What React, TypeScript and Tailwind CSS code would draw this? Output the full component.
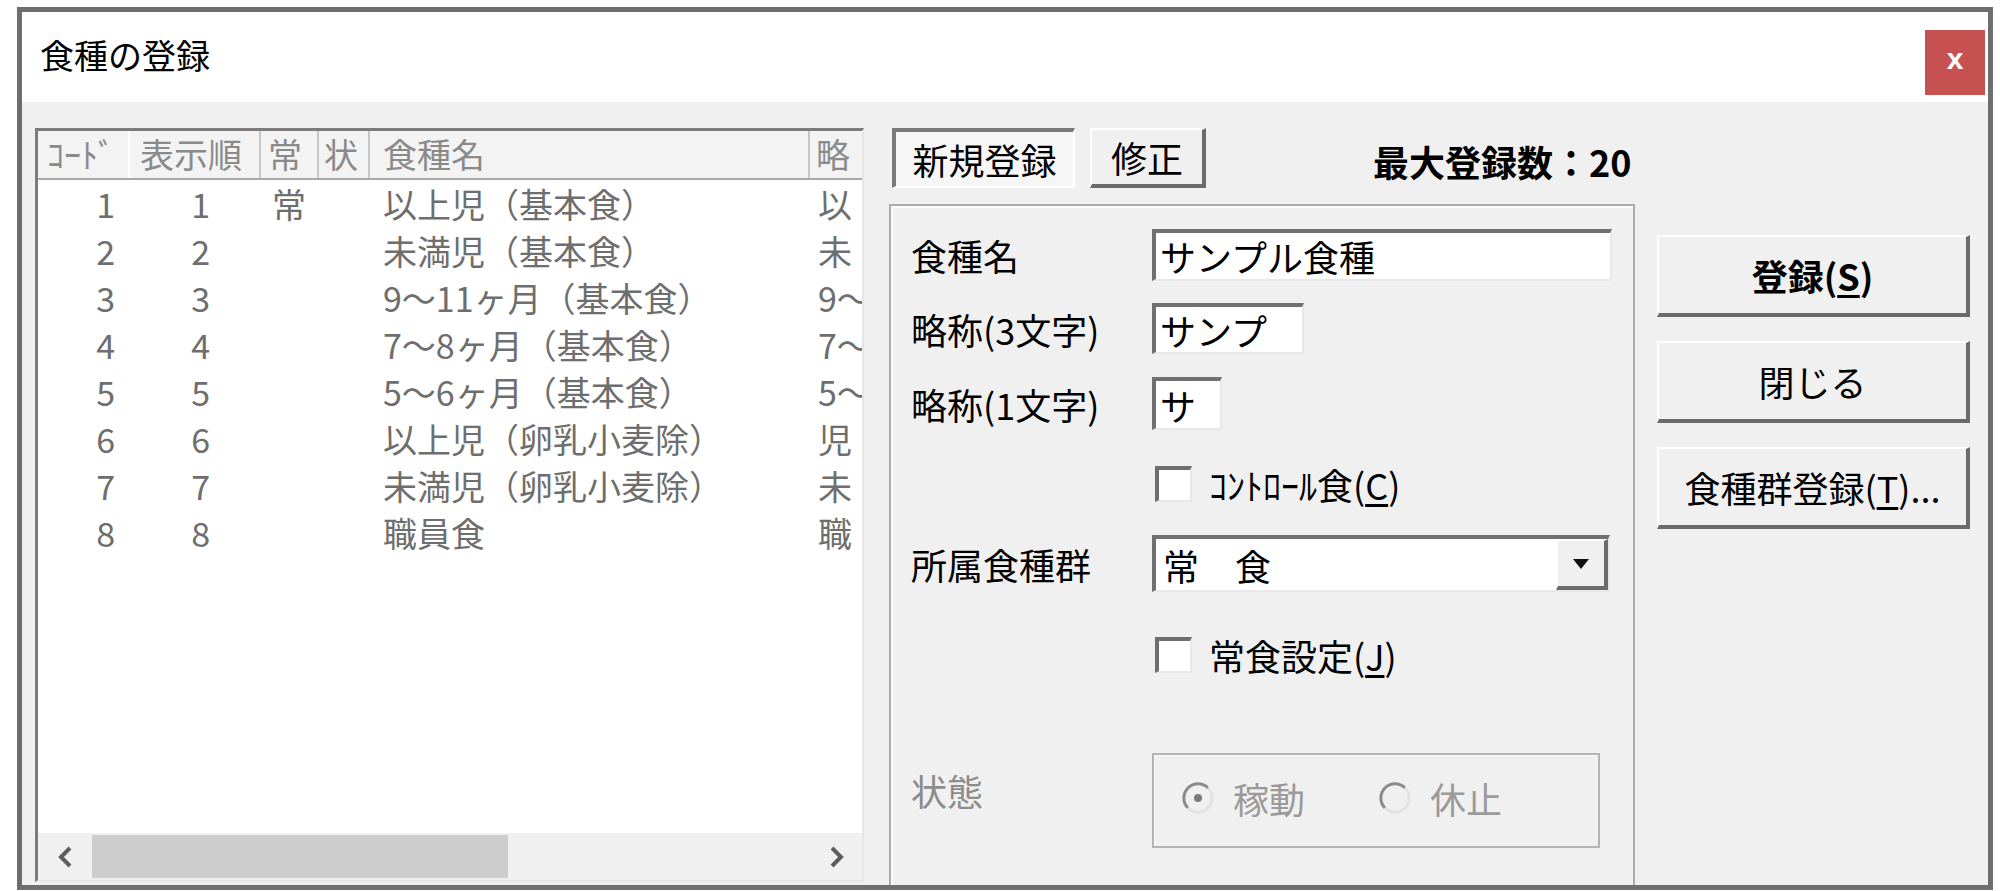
import React from 'react'

const rows = [
  ['1', '1', '常', '以上児（基本食）', '以'],
  ['2', '2', '', '未満児（基本食）', '未'],
  ['3', '3', '', '9～11ヶ月（基本食）', '9～'],
  ['4', '4', '', '7～8ヶ月（基本食）', '7～'],
  ['5', '5', '', '5～6ヶ月（基本食）', '5～'],
  ['6', '6', '', '以上児（卵乳小麦除）', '児'],
  ['7', '7', '', '未満児（卵乳小麦除）', '未'],
  ['8', '8', '', '職員食', '職'],
]

const sunken =
  'border-t-[4px] border-l-[4px] border-r-2 border-b-2 border-t-[#707070] border-l-[#707070] border-r-[#e8e8e8] border-b-[#e8e8e8] bg-white'

const raised =
  'border-t-2 border-l-2 border-t-white border-l-white border-r-[4px] border-b-[4px] border-r-[#6b6b6b] border-b-[#6b6b6b] bg-[#f0f0f0]'

function Radio({ checked }: { checked?: boolean }) {
  return (
    <svg width="34" height="34" viewBox="0 0 34 34" className="shrink-0">
      <circle cx="17" cy="17" r="14" fill="#f0f0f0" />
      <path d="M7 27 A14 14 0 0 1 27 7" stroke="#8a8a8a" strokeWidth="3" fill="none" />
      <path d="M27 7 A14 14 0 0 1 7 27" stroke="#e2e2e2" strokeWidth="3" fill="none" />
      {checked && <circle cx="17" cy="17" r="4" fill="#7a7a7a" />}
    </svg>
  )
}

function Checkbox() {
  return (
    <div className="h-[36px] w-[37px] shrink-0 border-t-[4px] border-l-[4px] border-r-2 border-b-2 border-t-[#6e6e6e] border-l-[#6e6e6e] border-r-[#e8e8e8] border-b-[#e8e8e8] bg-white" />
  )
}

function ListView() {
  return (
    <div className="ml-[13px] mt-[26px] flex h-[754px] w-[829px] shrink-0 flex-col overflow-hidden border-t-[3px] border-l-[3px] border-r-2 border-b-2 border-t-[#7c7c7c] border-l-[#7c7c7c] border-r-[#e6e6e6] border-b-[#e6e6e6] bg-white">
      <div className="flex h-[49px] shrink-0 border-b-2 border-[#a9a9a9] bg-[#f3f3f3] text-[34px] leading-[46px] text-[#8a8a8a] whitespace-nowrap">
        <div className="w-[92px] shrink-0 border-r-2 border-white pl-[9px]">ｺｰﾄﾞ</div>
        <div className="w-[131px] shrink-0 border-r-2 border-[#c6c6c6] pl-[10px]">表示順</div>
        <div className="w-[58px] shrink-0 border-r-2 border-[#c6c6c6] pl-[7px]">常</div>
        <div className="w-[51px] shrink-0 border-r-2 border-[#c6c6c6] pl-[5px]">状</div>
        <div className="w-[440px] shrink-0 border-r-2 border-[#c6c6c6] pl-[13px]">食種名</div>
        <div className="pl-[6px]">略</div>
      </div>
      <div className="flex-1 text-[34px] leading-[47px] text-[#6e6e6e] whitespace-nowrap">
        {rows.map((r) => (
          <div key={r[0]} className="flex h-[47px]">
            <div className="w-[92px] shrink-0 pr-[15px] text-right">{r[0]}</div>
            <div className="w-[131px] shrink-0 pr-[51px] text-right">{r[1]}</div>
            <div className="w-[58px] shrink-0 pl-[11px]">{r[2]}</div>
            <div className="w-[51px] shrink-0" />
            <div className="w-[440px] shrink-0 pl-[13px]">{r[3]}</div>
            <div className="pl-[8px]">{r[4]}</div>
          </div>
        ))}
      </div>
      <div className="flex h-[47px] shrink-0 items-center bg-[#f0f0f0]">
        <div className="flex w-[54px] justify-center">
          <svg width="16" height="24" viewBox="0 0 16 24">
            <polyline points="13,3 4,12 13,21" fill="none" stroke="#5e5e5e" strokeWidth="4" />
          </svg>
        </div>
        <div className="h-[43px] w-[416px] bg-[#cdcdcd]" />
        <div className="flex-1" />
        <div className="flex w-[50px] justify-center">
          <svg width="16" height="24" viewBox="0 0 16 24">
            <polyline points="3,3 12,12 3,21" fill="none" stroke="#5e5e5e" strokeWidth="4" />
          </svg>
        </div>
      </div>
    </div>
  )
}

function FormPanel() {
  return (
    <div className="h-[681px] w-[746px] shrink-0 border-2 border-b-0 border-[#ababab] text-[36px] leading-[44px] text-black shadow-[inset_2px_2px_0_#fbfbfb]">
      <div className="mt-[23px] flex h-[52px] items-center pl-[20px]">
        <div className="w-[241px] shrink-0">食種名</div>
        <div className={`flex h-[52px] w-[460px] items-center pl-[4px] ${sunken}`}>サンプル食種</div>
      </div>
      <div className="mt-[22px] flex h-[51px] items-center pl-[20px]">
        <div className="w-[241px] shrink-0">略称(3文字)</div>
        <div className={`flex h-[51px] w-[152px] items-center pl-[4px] ${sunken}`}>サンプ</div>
      </div>
      <div className="mt-[23px] flex h-[53px] items-center pl-[20px]">
        <div className="w-[241px] shrink-0">略称(1文字)</div>
        <div className={`flex h-[53px] w-[70px] items-center pl-[4px] ${sunken}`}>サ</div>
      </div>
      <div className="mt-[36px] flex h-[36px] items-center pl-[264px]">
        <Checkbox />
        <div className="ml-[17px] whitespace-nowrap">
          ｺﾝﾄﾛｰﾙ食(<span className="underline underline-offset-4">C</span>)
        </div>
      </div>
      <div className="mt-[33px] flex h-[57px] items-center pl-[20px]">
        <div className="w-[241px] shrink-0">所属食種群</div>
        <div className={`flex h-[57px] w-[458px] items-stretch ${sunken}`}>
          <div className="flex flex-1 items-center pl-[7px]">常　食</div>
          <div className={`flex w-[52px] items-center justify-center ${raised}`}>
            <svg width="16" height="10" viewBox="0 0 16 10">
              <polygon points="0,0 16,0 8,10" fill="#111" />
            </svg>
          </div>
        </div>
      </div>
      <div className="mt-[45px] flex h-[36px] items-center pl-[264px]">
        <Checkbox />
        <div className="ml-[17px] whitespace-nowrap">
          常食設定(<span className="underline underline-offset-4">J</span>)
        </div>
      </div>
      <div className="mt-[80px] flex h-[95px] items-start pl-[20px]">
        <div className="mt-[15px] w-[241px] shrink-0 text-[#8c8c8c]">状態</div>
        <div className="flex h-[95px] w-[448px] items-center border-2 border-[#b3b3b3] pb-[6px] pl-[27px] text-[#9a9a9a] shadow-[inset_1px_1px_0_#fbfbfb]">
          <Radio checked />
          <div className="ml-[18px]">稼動</div>
          <div className="ml-[73px]">
            <Radio />
          </div>
          <div className="ml-[18px]">休止</div>
        </div>
      </div>
    </div>
  )
}

export default function App() {
  return (
    <div className="h-[891px] w-[2000px] bg-white pl-[17px] pt-[7px] font-['Noto_Sans_CJK_JP',sans-serif]">
      <div className="flex h-[883px] w-[1976px] flex-col border-[5px] border-[#6e6e6e] bg-[#f0f0f0]">
        <div className="flex h-[90px] shrink-0 items-start bg-white">
          <div className="pl-[18px] pt-[20px] text-[34px] leading-[46px] text-black">食種の登録</div>
          <div className="ml-auto mr-[3px] mt-[18px] flex h-[65px] w-[60px] items-center justify-center bg-[#c75050] pb-[8px] font-['Liberation_Sans',sans-serif] text-[30px] font-bold text-white">
            x
          </div>
        </div>

        <div className="flex flex-1 items-start overflow-hidden">
          <ListView />

          <div className="ml-[25px] mt-[26px] flex flex-col">
            <div className="flex h-[60px] items-center">
              <div className="ml-[3px] flex h-[60px] w-[183px] items-center justify-center border-t-[4px] border-l-[4px] border-r-2 border-b-2 border-t-[#7a7a7a] border-l-[#7a7a7a] border-r-white border-b-white bg-[#f6f6f6] text-[36px] text-black">
                新規登録
              </div>
              <div className={`ml-[15px] flex h-[60px] w-[116px] items-center justify-center text-[36px] text-black ${raised}`}>
                修正
              </div>
              <div className="ml-[167px] pt-[6px] text-[36px] font-bold text-black">最大登録数：20</div>
            </div>

            <div className="mt-[16px] flex items-start">
              <FormPanel />
              <div className="ml-[22px] mt-[31px] flex w-[313px] flex-col gap-[24px] text-[36px] text-black">
                <div className={`flex h-[82px] items-center justify-center font-bold ${raised}`}>
                  登録(<span className="underline underline-offset-4">S</span>)
                </div>
                <div className={`flex h-[82px] items-center justify-center ${raised}`}>閉じる</div>
                <div className={`flex h-[82px] items-center justify-center whitespace-nowrap ${raised}`}>
                  食種群登録(<span className="underline underline-offset-4">T</span>)...
                </div>
              </div>
            </div>
          </div>
        </div>
      </div>
    </div>
  )
}
